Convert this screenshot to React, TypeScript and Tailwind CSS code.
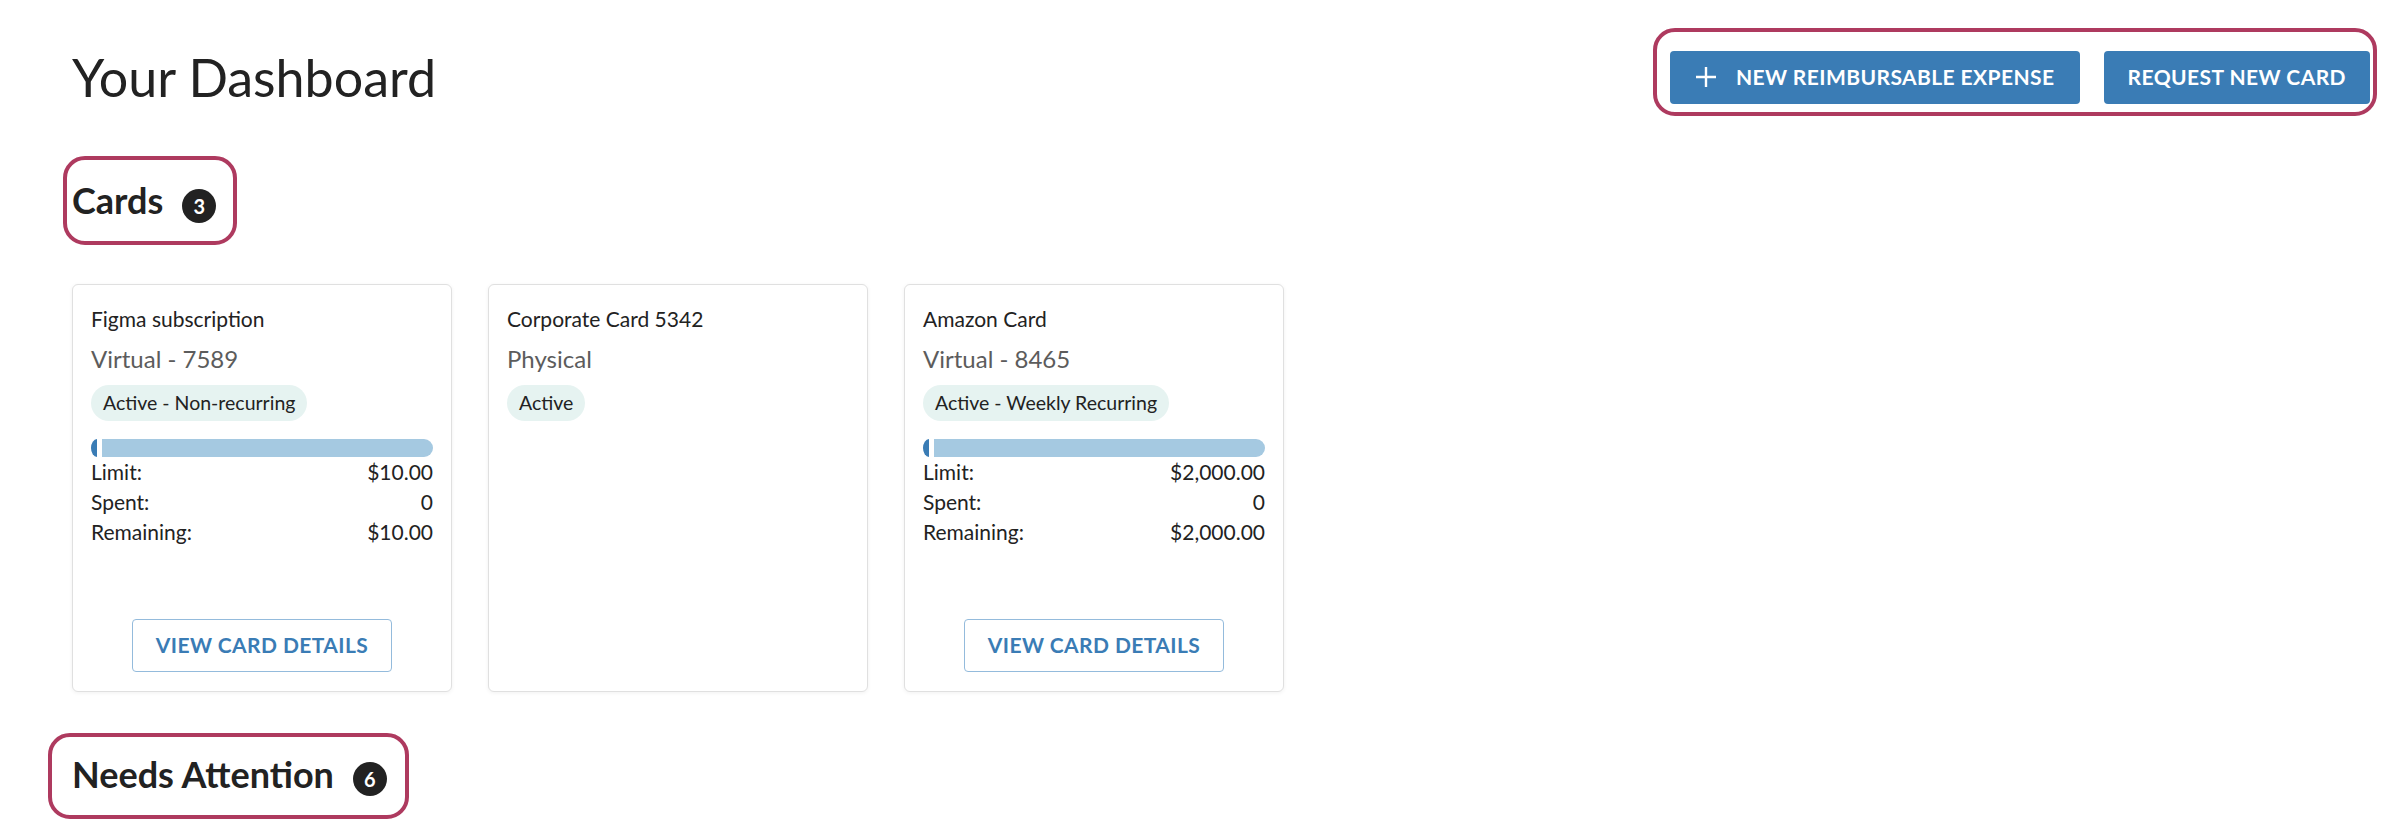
import React from "react";

type Card = {
  name: string;
  kind: string;
  status: string;
  limit?: string;
  spent?: string;
  remaining?: string;
};

const CARDS: Card[] = [
  { name: "Figma subscription", kind: "Virtual - 7589", status: "Active - Non-recurring", limit: "$10.00", spent: "0", remaining: "$10.00" },
  { name: "Corporate Card 5342", kind: "Physical", status: "Active" },
  { name: "Amazon Card", kind: "Virtual - 8465", status: "Active - Weekly Recurring", limit: "$2,000.00", spent: "0", remaining: "$2,000.00" },
];

function Badge({ n }: { n: number }) {
  return (
    <span className="flex h-[34px] w-[34px] translate-y-[5px] items-center justify-center rounded-full bg-[#222222] text-[20px] font-bold leading-none text-white">
      {n}
    </span>
  );
}

function SpendCard({ card }: { card: Card }) {
  const hasLimit = card.limit !== undefined;
  return (
    <div className="flex h-[408px] flex-col rounded-[6px] border border-[#e0e0e0] bg-white px-[18px] pb-[19px] pt-[19px] shadow-[0_1px_4px_rgba(0,0,0,0.06)]">
      <p className="text-[21px] leading-[30px] text-[#222222]">{card.name}</p>
      <p className="mt-[7px] text-[24px] leading-[36px] text-[#5c5c5c]">{card.kind}</p>
      <div className="mt-[8px] flex">
        <span className="h-[36px] rounded-full bg-[#e6f3f1] px-[12px] text-[19.5px] leading-[36px] text-[#222222]">
          {card.status}
        </span>
      </div>
      {hasLimit && (
        <>
          <div className="mt-[18px] flex h-[18px] gap-[5px]">
            <div className="w-[6px] rounded-l-[6px_9px] bg-[#3a7cb5]" />
            <div className="flex-1 rounded-r-full bg-[#a5c9e1]" />
          </div>
          <div className="text-[21px] leading-[30px] text-[#222222]">
            <div className="flex justify-between"><span>Limit:</span><span>{card.limit}</span></div>
            <div className="flex justify-between"><span>Spent:</span><span>{card.spent}</span></div>
            <div className="flex justify-between"><span>Remaining:</span><span>{card.remaining}</span></div>
          </div>
          <div className="mt-auto flex justify-center">
            <button className="h-[53px] rounded-[4px] border border-[#94bbdc] bg-white px-[23px] text-[21px] font-bold tracking-[0.02em] text-[#3a7cb5]">
              VIEW CARD DETAILS
            </button>
          </div>
        </>
      )}
    </div>
  );
}

export default function App() {
  return (
    <div className="min-h-[840px] bg-white pl-[72px] pr-[14px] pt-[46px] font-['Lato','Noto_Sans',sans-serif] text-[#222222]">
      <header className="flex items-center justify-between">
        <h1 className="text-[52px] font-normal leading-[1.2]">Your Dashboard</h1>
        <div className="relative flex gap-[24px]">
          <span className="pointer-events-none absolute bottom-[-12px] left-[-17px] right-[-7px] top-[-23px] rounded-[22px] border-[4px] border-[#ae3a5f]" />
          <button className="flex h-[53px] items-center gap-[19px] rounded-[4px] bg-[#3a7cb5] px-[25px] text-[21px] font-bold tracking-[0.02em] text-white">
            <svg width="22" height="22" viewBox="0 0 22 22" fill="none" stroke="currentColor" strokeWidth="2.4">
              <path d="M11 1v20M1 11h20" />
            </svg>
            NEW REIMBURSABLE EXPENSE
          </button>
          <button className="h-[53px] rounded-[4px] bg-[#3a7cb5] px-[24px] text-[21px] font-bold tracking-[0.02em] text-white">
            REQUEST NEW CARD
          </button>
        </div>
      </header>

      <section className="mt-[71px]">
        <div className="relative inline-flex items-center gap-[19px]">
          <span className="pointer-events-none absolute bottom-[-22px] left-[-9px] right-[-21px] top-[-23px] rounded-[22px] border-[4px] border-[#ae3a5f]" />
          <h2 className="text-[36px] font-bold leading-[1.2]">Cards</h2>
          <Badge n={3} />
        </div>
        <div className="mt-[61px] grid grid-cols-[repeat(3,380px)] gap-[36px]">
          {CARDS.map((c) => (
            <SpendCard key={c.name} card={c} />
          ))}
        </div>
      </section>

      <section className="mt-[61px]">
        <div className="relative inline-flex items-center gap-[19px]">
          <span className="pointer-events-none absolute bottom-[-23px] left-[-24px] right-[-22px] top-[-20px] rounded-[22px] border-[4px] border-[#ae3a5f]" />
          <h2 className="text-[36px] font-bold leading-[1.2]">Needs Attention</h2>
          <Badge n={6} />
        </div>
      </section>
    </div>
  );
}
